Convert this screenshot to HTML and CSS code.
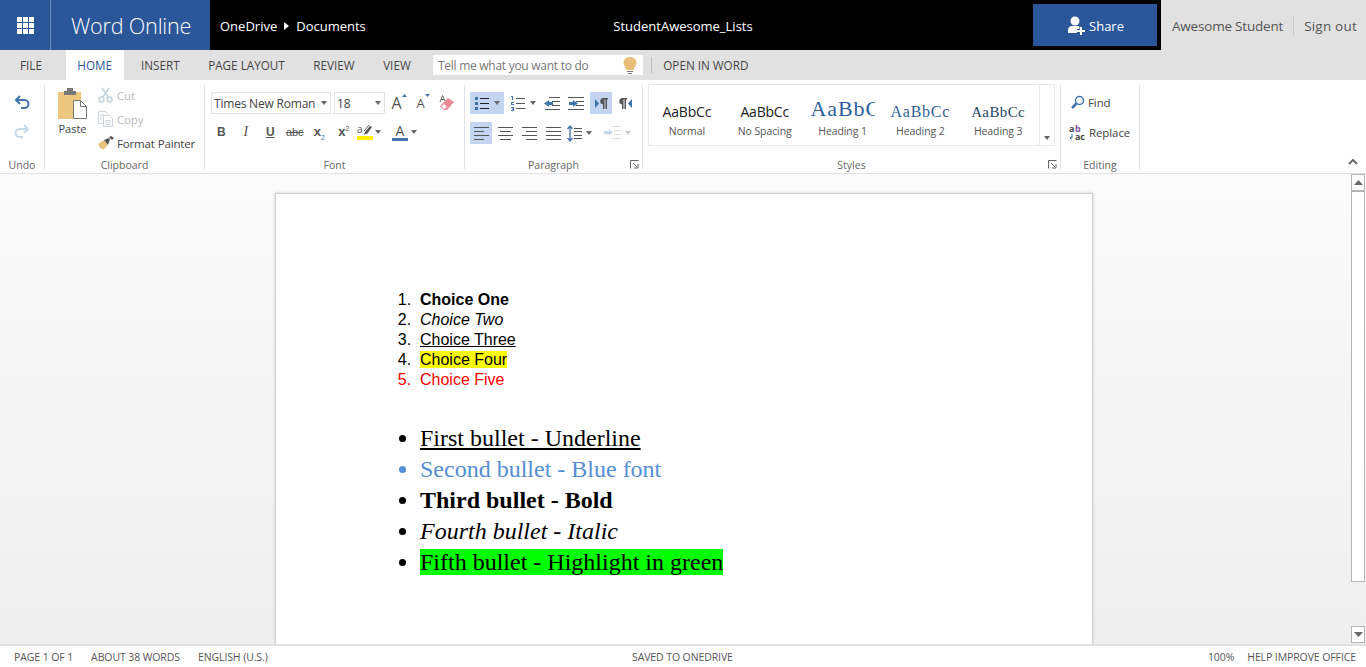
FILE: index.html
```html
<!DOCTYPE html>
<html lang="en">
<head>
  <meta charset="utf-8">
  <title>StudentAwesome_Lists - Word Online</title>
  <link rel="stylesheet" href="styles.css">
</head>
<body>
  <!-- top bar -->
  <header class="topbar">
    <div class="brand">
      <div class="waffle">
        <svg width="17" height="17" viewBox="0 0 17 17" fill="#fff"><path d="M0 0h5v5H0zM6 0h5v5H6zM12 0h5v5h-5zM0 6h5v5H0zM6 6h5v5H6zM12 6h5v5h-5zM0 12h5v5H0zM6 12h5v5H6zM12 12h5v5h-5z"/></svg>
      </div>
      <div class="appname">Word Online</div>
    </div>
    <div class="crumbs">OneDrive
      <svg width="5" height="8" viewBox="0 0 5 8" fill="#fff"><path d="M0 0l5 4-5 4z"/></svg>
      Documents</div>
    <div class="doctitle">StudentAwesome_Lists</div>
    <button class="share">
      <svg width="19" height="19" viewBox="0 0 19 19" fill="#fff"><circle cx="8" cy="5" r="4.5"/><path d="M1 17v-3c0-2.500 2-4 4-4h6c1 0 1.500.5 1.500 1.500V13H10v4z"/><path d="M13 11h2v3h3v2h-3v3h-2v-3h-3v-2h3z"/></svg>
      Share
    </button>
    <div class="account"><span>Awesome Student</span><i></i><span class="signout">Sign out</span></div>
  </header>

  <!-- tabs -->
  <nav class="tabs">
    <span class="tab tab-file">FILE</span>
    <span class="tab tab-on">HOME</span>
    <span class="tab">INSERT</span>
    <span class="tab">PAGE LAYOUT</span>
    <span class="tab">REVIEW</span>
    <span class="tab">VIEW</span>
    <div class="tell">Tell me what you want to do
      <svg width="14" height="17" viewBox="0 0 14 17"><path fill="#e8bd77" d="M7 0c4 0 6.500 2.500 6.500 6 0 3-2.500 4-3 7h-7c-.5-3-3-4-3-7C.5 2.500 3 0 7 0z"/><path fill="#777" d="M4 14h6v1H4zM5 16h4v1H5z"/></svg>
    </div>
    <i class="tabsep"></i>
    <span class="tab">OPEN IN WORD</span>
  </nav>

  <!-- ribbon -->
  <section class="ribbon">
    <div class="group g-undo">
      <div class="gbody undo-col">
        <svg width="16" height="15" viewBox="0 0 16 15" fill="none" stroke="#3f74ad" stroke-width="2"><path d="M6 1L2 5l4 4M2 5h8c3 0 4.500 2 4.500 4s-1.500 4-4.500 4H7"/></svg>
        <svg width="16" height="15" viewBox="0 0 16 15" fill="none" stroke="#c9d9ea" stroke-width="2"><path d="M10 1l4 4-4 4M14 5H6C3 5 1.500 7 1.500 9s1.500 4 4.500 4h3"/></svg>
      </div>
      <div class="glabel">Undo</div>
    </div>

    <div class="group g-clip">
      <div class="gbody clip-body">
        <div class="paste">
          <svg width="29" height="31" viewBox="0 0 29 31"><path fill="#eec77f" d="M0 4h23v27H0z"/><path fill="#777" d="M6 3h3V0h6v3h3v4H6z"/><path fill="#fff" stroke="#777" d="M15.500 12.500h7l6 6v12h-13z"/><path fill="none" stroke="#777" d="M22.500 12.500v6h6"/></svg>
          <span>Paste</span>
        </div>
        <div class="clip-list">
          <div class="clip-row off">
            <svg width="16" height="16" viewBox="0 0 16 16" fill="none" stroke="#c5d3e0" stroke-width="1.500"><circle cx="3.500" cy="12.500" r="2.500"/><circle cx="11.500" cy="12.500" r="2.500"/><path d="M4.500 10.500L11 1M10.500 10.500L4 1"/></svg>
            Cut</div>
          <div class="clip-row off">
            <svg width="16" height="16" viewBox="0 0 16 16" fill="#fff" stroke="#cdd5dc"><path d="M.5.500h7l2 2v10h-9z"/><path d="M5.500 4.500h6l3 3v8h-9z"/><path d="M2 4h4M2 6h2M2 8h2M7.500 9.500h5M7.500 11.500h5M7.500 13.500h5"/></svg>
            Copy</div>
          <div class="clip-row">
            <svg width="16" height="14" viewBox="0 0 16 14"><path fill="#e9c27c" d="M0 8l6-4 4 5-5 5-1-2-1 1z"/><path fill="#555" d="M6 4l5-2 1 1-2 6zM11 1l2-1 3 2-2 2z"/></svg>
            Format Painter</div>
        </div>
      </div>
      <div class="glabel">Clipboard</div>
    </div>

    <div class="group g-font">
      <div class="gbody">
        <div class="row row-font">
          <div class="combo combo-name">Times New Roman<b class="caret"></b></div>
          <div class="combo combo-size">18<b class="caret"></b></div>
          <span class="fbtn fbtn-grow">A<svg width="5" height="3" viewBox="0 0 5 3" fill="#3f74ad"><path d="M0 3l2.500-3L5 3z"/></svg></span>
          <span class="fbtn fbtn-shrink">A<svg width="5" height="3" viewBox="0 0 5 3" fill="#3f74ad"><path d="M0 0h5L2.500 3z"/></svg></span>
          <svg class="eraser" width="16" height="16" viewBox="0 0 16 16"><path fill="#ea8a97" d="M1 11l8-8 6 4-7 8H5z"/><path fill="#fff" stroke="#ea8a97" d="M2 11.500l3-3 3 3-2 3H5z"/><path fill="none" stroke="#666" d="M1 7l2.500-6.500L6 6M2 4.500h3"/></svg>
        </div>
        <div class="row row-fmt">
          <span class="fmt w-b">B</span>
          <span class="fmt w-i">I</span>
          <span class="fmt w-u">U</span>
          <span class="fmt w-s">abc</span>
          <span class="fmt w-x">x<sub>2</sub></span>
          <span class="fmt w-x2">x<sup>2</sup></span>
          <span class="hilite">
            <svg width="16" height="18" viewBox="0 0 16 18"><path fill="#fff200" d="M0 13h16v4H0z"/><path fill="none" stroke="#555" d="M7 8L12 2M7 11h1"/><path fill="#555" d="M8 9l5-6 2 1-5 7H8z"/></svg><span class="hilite-a">a</span><b class="caret"></b>
          </span>
          <span class="fcolor"><span class="fcolor-a">A</span><b class="caret"></b></span>
        </div>
      </div>
      <div class="glabel">Font</div>
    </div>

    <div class="group g-para">
      <div class="gbody">
        <div class="row para-row">
          <span class="pbtn on w-bullets">
            <svg width="15" height="15" viewBox="0 0 15 15"><path fill="#3f74ad" d="M0 1h3v3H0zM0 6h3v3H0zM0 11h3v3H0z"/><path stroke="#222" d="M5 2.500h9M5 7.500h9M5 12.500h9"/></svg><b class="caret"></b>
          </span>
          <span class="pbtn w-numbers">
            <svg width="15" height="15" viewBox="0 0 15 15"><path fill="#3f74ad" d="M0 0h2v4H1V1H0zM0 6h3v1H1v1h2v1H0V7h0zM0 11h3v4H0v-1h2v-.5H1v-1h1V12H0z"/><path stroke="#555" d="M5 2.500h9M5 7.500h9M5 12.500h9"/></svg><b class="caret"></b>
          </span>
          <span class="pbtn w-ind1">
            <svg width="16" height="13" viewBox="0 0 16 13"><path stroke="#555" d="M5 .5h11M8 4.500h8M8 8.500h8M1 12.500h15"/><path fill="#3f74ad" d="M0 6.500L5 3v2h4v3H5v2z"/></svg>
          </span>
          <span class="pbtn w-ind2">
            <svg width="16" height="13" viewBox="0 0 16 13"><path stroke="#555" d="M0 .5h16M8 4.500h8M8 8.500h8M0 12.500h16"/><path fill="#3f74ad" d="M10 6.500L5 3v2H1v3h4v2z"/></svg>
          </span>
          <span class="pbtn on w-ltr">
            <svg width="13" height="11" viewBox="0 0 13 11"><path fill="#3f74ad" d="M0 1l4 4.500L0 10z"/><path fill="#555" d="M8 0h5v1.500h-1V11h-1.500V1.500h-1V11H8V6.500a3.300 3.300 0 010-6.500z"/></svg>
          </span>
          <span class="pbtn w-rtl">
            <svg width="13" height="11" viewBox="0 0 13 11"><path fill="#3f74ad" d="M13 1L9 5.500l4 4.500z"/><path fill="#555" d="M3 0h5v1.500H7V11H5.500V1.500h-1V11H3V6.500A3.300 3.300 0 013 0z"/></svg>
          </span>
        </div>
        <div class="row para-row para-row2">
          <span class="pbtn on w-al"><svg width="15" height="13" viewBox="0 0 15 13"><path stroke="#555" d="M0 .5h15M0 4.500h10M0 8.500h15M0 12.500h10"/></svg></span>
          <span class="pbtn w-ac"><svg width="15" height="13" viewBox="0 0 15 13"><path stroke="#555" d="M0 .5h15M2 4.500h11M0 8.500h15M2 12.500h11"/></svg></span>
          <span class="pbtn w-ar"><svg width="15" height="13" viewBox="0 0 15 13"><path stroke="#555" d="M0 .5h15M4 4.500h11M0 8.500h15M4 12.500h11"/></svg></span>
          <span class="pbtn w-aj"><svg width="15" height="13" viewBox="0 0 15 13"><path stroke="#555" d="M0 .5h15M0 4.500h15M0 8.500h15M0 12.500h15"/></svg></span>
          <span class="pbtn w-sp">
            <svg width="15" height="17" viewBox="0 0 15 17"><path fill="none" stroke="#3f74ad" stroke-width="1.300" d="M3 1v15M.5 4L3 1l2.500 3M.5 13L3 16l2.500-3"/><path stroke="#555" d="M7 3.500h8M7 6.500h8M7 10.500h8M7 13.500h8"/></svg><b class="caret"></b>
          </span>
          <span class="pbtn w-ls">
            <svg width="17" height="15" viewBox="0 0 17 15"><path stroke="#ddd" d="M8 .5h9M10 4.500h7M10 8.500h7M8 12.500h9"/><path fill="#c9d9ea" d="M9 6.500L5 3v2H0v3h5v2z"/></svg><b class="caret caret-off"></b>
          </span>
        </div>
      </div>
      <div class="glabel">Paragraph
        <svg class="launcher" width="9" height="9" viewBox="0 0 9 9" fill="none" stroke="#666"><path d="M.5 8.500v-8h8"/><path d="M3 3l4 4M8 4v4H4"/></svg>
      </div>
    </div>

    <div class="group g-styles">
      <div class="gbody">
        <div class="gallery">
          <div class="style-item"><span class="sample s-normal">AaBbCc</span><span class="sname">Normal</span></div>
          <div class="style-item"><span class="sample s-normal">AaBbCc</span><span class="sname">No Spacing</span></div>
          <div class="style-item"><span class="sample s-h1">AaBbCc</span><span class="sname">Heading 1</span></div>
          <div class="style-item"><span class="sample s-h2">AaBbCc</span><span class="sname">Heading 2</span></div>
          <div class="style-item"><span class="sample s-h3">AaBbCc</span><span class="sname">Heading 3</span></div>
          <div class="gallery-more"><b class="caret"></b></div>
        </div>
      </div>
      <div class="glabel">Styles
        <svg class="launcher" width="9" height="9" viewBox="0 0 9 9" fill="none" stroke="#666"><path d="M.5 8.500v-8h8"/><path d="M3 3l4 4M8 4v4H4"/></svg>
      </div>
    </div>

    <div class="group g-edit">
      <div class="gbody edit-list">
        <div class="edit-row">
          <svg width="14" height="14" viewBox="0 0 14 14" fill="none" stroke="#3f74ad"><circle cx="8.500" cy="5.500" r="4" stroke-width="1.500"/><path stroke-width="2.500" d="M5.500 8.500L1 13"/></svg>
          Find</div>
        <div class="edit-row">
          <svg class="rep-ico" width="17" height="17" viewBox="0 0 17 17"><text x="0" y="8" class="rep-top">a</text><text x="6" y="8" class="rep-b">b</text><text x="6" y="16" class="rep-top">ac</text><path fill="none" stroke="#3f74ad" d="M3 10v4H1M2.500 12.500L1 14l1.500 1.500"/></svg>
          Replace</div>
      </div>
      <div class="glabel">Editing</div>
    </div>

    <div class="collapse">
      <svg width="10" height="6" viewBox="0 0 10 6" fill="none" stroke="#666" stroke-width="2"><path d="M1 5l4-4 4 4"/></svg>
    </div>
  </section>

  <!-- document -->
  <main class="workspace">
    <div class="canvas">
      <article class="page">
        <ol class="choices">
          <li class="bold">Choice One</li>
          <li class="ital">Choice Two</li>
          <li class="under">Choice Three</li>
          <li><span class="hl-yellow">Choice Four</span></li>
          <li class="red">Choice Five</li>
        </ol>
        <ul class="bullets">
          <li class="under">First bullet - Underline</li>
          <li class="blue">Second bullet - Blue font</li>
          <li class="bold">Third bullet - Bold</li>
          <li class="ital">Fourth bullet - Italic</li>
          <li><span class="hl-green">Fifth bullet - Highlight in green</span></li>
        </ul>
      </article>
    </div>
    <div class="scrollbar">
      <div class="sb-btn"><svg width="9" height="5" viewBox="0 0 9 5" fill="#666"><path d="M0 5l4.500-5L9 5z"/></svg></div>
      <div class="sb-thumb"></div>
      <div class="sb-track"></div>
      <div class="sb-btn"><svg width="9" height="5" viewBox="0 0 9 5" fill="#666"><path d="M0 0h9L4.500 5z"/></svg></div>
    </div>
  </main>

  <!-- status bar -->
  <footer class="status">
    <div class="status-left"><span>PAGE 1 OF 1</span><span>ABOUT 38 WORDS</span><span>ENGLISH (U.S.)</span></div>
    <div class="status-mid">SAVED TO ONEDRIVE</div>
    <div class="status-right"><span>100%</span><span>HELP IMPROVE OFFICE</span></div>
  </footer>
</body>
</html>
```

FILE: styles.css
```css
/* --- page --- */
*{box-sizing:border-box}
html,body{height:100%}
body{margin:0;height:667px;overflow:hidden;display:flex;flex-direction:column;font-family:"Open Sans",Arial,sans-serif;font-size:11.5px;color:#444;background:#fff}
svg{display:block;flex:none}
i{font-style:normal}

/* --- top bar --- */
.topbar{height:50px;display:flex;align-items:center;background:#000;color:#fff;flex:none}
.brand{width:210px;height:50px;background:#2b579a;display:flex}
.waffle{width:51px;height:50px;display:flex;align-items:center;justify-content:center;border-right:1px solid #6a8cbc}
.appname{font-size:21.6px;font-weight:300;margin-left:20px;line-height:52px;letter-spacing:-.2px}
.crumbs{width:393px;padding:1px 0 0 10px;font-size:13px;display:flex;align-items:center;gap:7px}
.doctitle{width:160px;padding-top:1px;text-align:center;font-size:13px}
.share{margin-left:auto;margin-right:4px;width:124px;height:42px;background:#2b579a;border:0;color:#fff;font:13px "Open Sans",Arial,sans-serif;display:flex;align-items:center;justify-content:center;gap:3px;padding:1px 0 0 1px}
.account{width:205px;height:50px;background:#e1e1e1;color:#555;font-size:13.5px;display:flex;align-items:center;padding:1px 0 0 11px;letter-spacing:-.2px}
.account i{width:1px;height:20px;background:#c8c8c8;margin:0 10px}
.signout{letter-spacing:.2px}

/* --- tabs --- */
.tabs{height:30px;background:#e1e1e1;display:flex;align-items:center;flex:none;font-size:11.7px;color:#444}
.tab{padding:0 14.3px;height:30px;line-height:31px}
.tab-file{padding:0 23.7px 0 20px}
.tab-on{background:#fff;color:#2b579a;padding:0 11.7px;margin-right:3px}
.tell{width:210px;height:20px;background:#fff;margin-left:8px;padding:0 6px 0 5px;color:#777;display:flex;align-items:center;justify-content:space-between;font-size:12px;letter-spacing:-.27px}
.tabsep{width:1px;height:16px;background:#bbb;margin:0 -3px 0 8px}

/* --- ribbon --- */
.ribbon{height:94px;flex:none;display:flex;border-bottom:1px solid #e1e1e1;padding-top:5px;position:relative}
.group{height:84px;border-right:1px solid #e1e1e1;display:flex;flex-direction:column;flex:none}
.gbody{flex:1;min-height:0}
.glabel{height:16px;margin-bottom:-4px;text-align:center;line-height:17px;font-size:10.5px;color:#666;position:relative}
.launcher{position:absolute;right:3px;top:3px}
.g-undo{width:45px}
.g-clip{width:160px}
.g-font{width:260px}
.g-para{width:178px}
.g-styles{width:418px}
.g-edit{width:79px}

.undo-col{display:flex;flex-direction:column;align-items:center;gap:14px;padding-top:10px}

.clip-body{display:flex;padding-left:13px}
.paste{width:29px;margin-right:11px;padding-top:3px;font-size:11px;color:#444;display:flex;flex-direction:column;align-items:center}
.paste span{margin-top:2px}
.clip-list{display:flex;flex-direction:column;margin-top:-2px}
.clip-row{height:24px;flex:none;display:flex;align-items:center;gap:3px;font-size:11.5px;white-space:nowrap;letter-spacing:-.15px}
.clip-row.off{color:#bbb}

.caret{display:inline-block;width:0;height:0;border:3.5px solid transparent;border-top:4px solid #666;border-bottom:0;flex:none}
.caret-off{border-top-color:#ccc}
.row{display:flex;align-items:center}

.row-font{height:22px;margin-top:7px;padding-left:6px}
.combo{height:22px;border:1px solid #e1e1e1;display:flex;align-items:center;justify-content:space-between;padding:0 3px 0 2px;font-size:12px;color:#444}
.combo-name{width:120px;margin-right:3px;letter-spacing:-.2px}
.combo-size{width:51px}
.fbtn{width:24px;display:flex;justify-content:center;font-size:16px;color:#555;line-height:18px}
.fbtn-grow{margin-left:2px}
.fbtn-shrink{font-size:13px}
.eraser{margin-left:4px}

.row-fmt{height:24px;margin-top:6px;padding-left:4px;font-size:12px;color:#555}
.fmt{width:24.5px;text-align:center;font-family:"Liberation Sans",Arial,sans-serif;line-height:20px}
.w-b{font-weight:700}
.w-i{font-style:italic;font-family:"Liberation Serif",serif;font-size:14px}
.w-u{text-decoration:underline;font-weight:700}
.w-s{text-decoration:line-through;font-size:11px}
.w-x,.w-x2{font-weight:700;font-size:13px}
.fmt sub,.fmt sup{font-size:7px;font-weight:400;color:#3f74ad;line-height:0}
.fmt sup{color:#555}
.hilite{position:relative;display:flex;align-items:center;width:26px;gap:2px;margin-left:1px}
.hilite-a{position:absolute;left:0;top:0;font-size:10px;line-height:12px;color:#555}
.fcolor{display:flex;align-items:center;gap:3px;margin-left:9px}
.fcolor-a{width:16px;text-align:center;font-size:14px;line-height:15px;color:#555;border-bottom:3px solid #3f74ad}

.para-row{height:22px;margin-top:7px;padding-left:5px}
.para-row2{margin-top:8px}
.pbtn{height:22px;display:flex;align-items:center;justify-content:center;gap:4px;flex:none}
.pbtn.on{background:#c3d5f0}
.w-bullets{width:34px;margin-right:5px}
.w-numbers{width:28px;margin-right:3px}
.w-ind1,.w-ind2{width:24px}
.w-ltr{width:22px;margin-left:2px}
.w-rtl{width:24px;margin-left:1px}
.w-al{width:22px;margin-right:1px}
.w-ac,.w-ar,.w-aj{width:24px}
.w-sp{width:28px}
.w-ls{width:30px;margin-left:9px}

.gallery{width:407px;height:62px;margin:-1px 0 0 5px;border:1px solid #e8e8e8;display:flex}
.style-item{width:78px;display:flex;flex-direction:column;align-items:center;overflow:hidden;padding:0 6px}
.style-item:first-child{margin-left:-1px}
.sample{height:34px;margin-top:9px;display:block;white-space:nowrap;color:#222;line-height:36px}
.s-normal{font-size:14px;font-family:"Open Sans",sans-serif;letter-spacing:-.2px}
.s-h1{font-size:22px;font-family:"Liberation Serif",serif;color:#2f5f9a;line-height:30px;letter-spacing:.9px;width:64px;overflow:hidden}
.s-h2{font-size:16px;font-family:"Liberation Serif",serif;color:#2f5f9a;letter-spacing:.75px}
.s-h3{font-size:15px;font-family:"Liberation Serif",serif;color:#28456e;letter-spacing:.4px}
.sname{font-size:10.5px;color:#555;line-height:14px;margin-top:-4px;white-space:nowrap;letter-spacing:-.1px}
.gallery-more{width:15px;border-left:1px solid #e8e8e8;margin-left:2px;display:flex;align-items:flex-end;justify-content:center;padding-bottom:5px}

.edit-list{padding:5px 0 0 10px;display:flex;flex-direction:column;gap:6px}
.edit-row{height:24px;flex:none;display:flex;align-items:center;gap:3px;font-size:11.5px;letter-spacing:-.1px}
.rep-ico{margin-left:-2px;overflow:visible}
.rep-top{font:700 9px "Open Sans",sans-serif;fill:#444}
.rep-b{font:700 9px "Open Sans",sans-serif;fill:#7b4fa6}
.collapse{position:absolute;right:8px;top:79px}

/* --- workspace --- */
.workspace{flex:1;min-height:0;display:flex;background:linear-gradient(#fbfbfb,#efefef)}
.canvas{flex:1;min-width:0;overflow:hidden;padding:19px 0 0 275px}
.page{width:818px;height:560px;background:#fff;border:1px solid #d0d0d0;box-shadow:0 0 3px #ccc;padding:96px 0 0 144px;font-family:"Liberation Sans",Arial,sans-serif;color:#000}
.choices{margin:0;padding:0;font-size:16px;line-height:20px}
.choices li::marker{content:counter(list-item) ".\a0\a0";font-weight:400;font-style:normal}
.bullets{margin:33px 0 0;padding:0;font-family:"Liberation Serif",serif;font-size:24px;line-height:31px}
.bold{font-weight:700}
.ital{font-style:italic}
.under{text-decoration:underline}
.red{color:#ff0000}
.blue{color:#558ed5}
.hl-yellow{background:#ffff00}
.hl-green{background:#00ff00}

.scrollbar{width:14px;margin:0 1px 1px 0;flex:none;display:flex;flex-direction:column}
.sb-btn{height:17px;border:1px solid #b5b5b5;background:#fff;display:flex;align-items:center;justify-content:center;flex:none}
.sb-thumb{height:391px;background:#fff;border:1px solid #b5b5b5;flex:none}
.sb-track{flex:1}

/* --- status bar --- */
.status{height:23px;flex:none;border-top:2px solid #e1e1e1;display:flex;align-items:center;justify-content:space-between;font-size:10.5px;color:#555;position:relative;padding:0 10px 0 14px;letter-spacing:-.1px}
.status-left{display:flex;gap:18px}
.status-right{display:flex;gap:13px}
.status-mid{position:absolute;left:632px}
```
